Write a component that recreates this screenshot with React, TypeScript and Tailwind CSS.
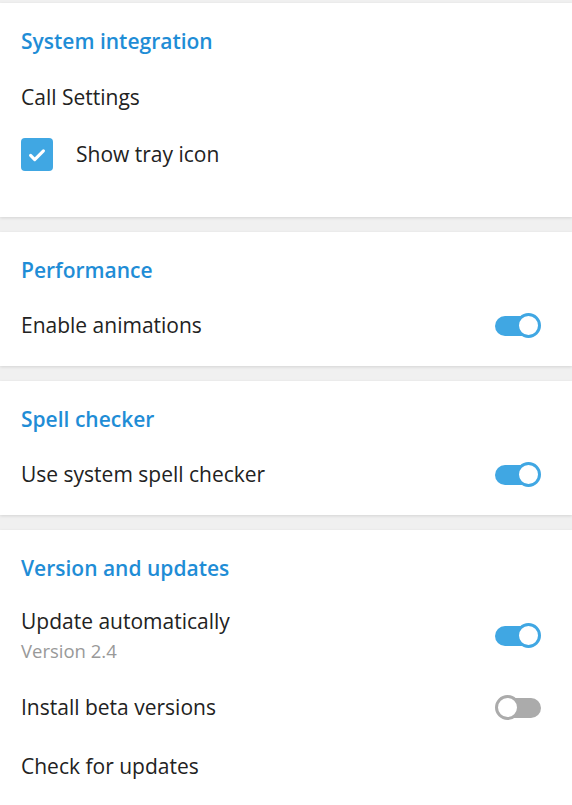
import React from "react";

function Toggle({ on }: { on: boolean }) {
  if (on) {
    return (
      <div className="relative w-[46px] h-[26px] flex items-center">
        <div className="w-[40px] h-[20px] rounded-full bg-[#40a7e3]" />
        <div className="absolute right-0 top-0 w-[25px] h-[25px] rounded-full bg-white border-[3px] border-[#40a7e3]" />
      </div>
    );
  }
  return (
    <div className="relative w-[46px] h-[26px] flex items-center justify-end">
      <div className="w-[40px] h-[20px] rounded-full bg-[#ababab]" />
      <div className="absolute left-0 top-0 w-[25px] h-[25px] rounded-full bg-white border-[3px] border-[#ababab]" />
    </div>
  );
}

function Section({ title, children, className = "" }: { title: string; children: React.ReactNode; className?: string }) {
  return (
    <div className={"bg-white shadow-[0_1px_3px_rgba(0,0,0,0.12)] " + className}>
      <h2 className="px-[21px] pt-[23px] text-[21px] font-semibold text-[#1f8dd6] leading-[30px]">{title}</h2>
      {children}
    </div>
  );
}

function Row({ label, on }: { label: string; on: boolean }) {
  return (
    <div className="flex items-center justify-between pl-[21px] pr-[31px] h-[56px]">
      <span className="text-[21px] text-[#222]">{label}</span>
      <Toggle on={on} />
    </div>
  );
}

export default function App() {
  return (
    <div className="w-[572px] h-[805px] bg-[#f0f0f0] pt-[3px] flex flex-col gap-[15px] overflow-hidden font-['Open_Sans',sans-serif]">
      <Section title="System integration" className="h-[214px]">
        <div className="px-[21px] pt-[26px] text-[21px] text-[#222] leading-[30px]">Call Settings</div>
        <div className="flex items-center px-[21px] mt-[26px]">
          <div className="w-[32px] h-[33px] rounded-[4px] bg-[#40a7e3] flex items-center justify-center">
            <svg width="22" height="22" viewBox="0 0 24 24" fill="none" stroke="white" strokeWidth="3.4" strokeLinecap="round" strokeLinejoin="round">
              <path d="M5 12.5l4.5 4.5L19 7.5" />
            </svg>
          </div>
          <span className="ml-[23px] text-[21px] text-[#222]">Show tray icon</span>
        </div>
      </Section>

      <Section title="Performance" className="h-[134px]">
        <div className="mt-[13px]">
          <Row label="Enable animations" on />
        </div>
      </Section>

      <Section title="Spell checker" className="h-[134px]">
        <div className="mt-[13px]">
          <Row label="Use system spell checker" on />
        </div>
      </Section>

      <Section title="Version and updates" className="flex-1">
        <div className="flex items-center justify-between pl-[21px] pr-[31px] mt-[23px]">
          <div className="flex flex-col">
            <span className="text-[21px] text-[#222] leading-[30px]">Update automatically</span>
            <span className="text-[18.5px] text-[#999] leading-[30px]">Version 2.4</span>
          </div>
          <Toggle on />
        </div>
        <div className="mt-[14px]">
          <Row label="Install beta versions" on={false} />
        </div>
        <div className="px-[21px] pt-[15px] text-[21px] text-[#222] leading-[30px]">Check for updates</div>
      </Section>
    </div>
  );
}
